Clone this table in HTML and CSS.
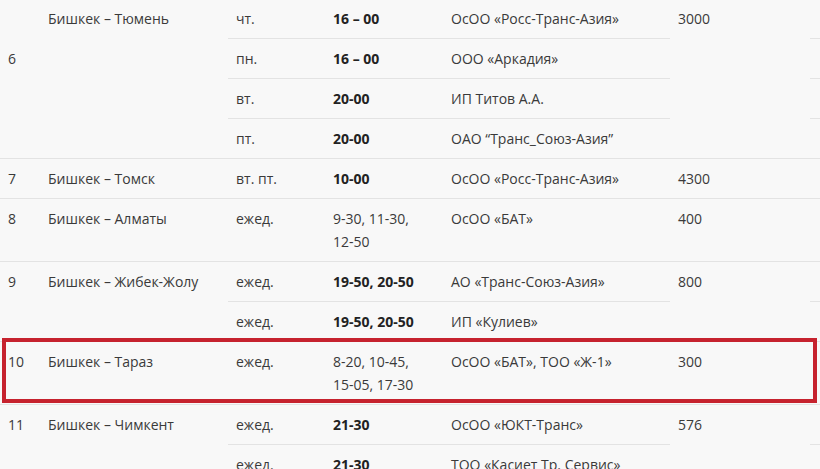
FILE: index.html
```html
<!DOCTYPE html>
<html lang="ru">

<head>
    <meta charset="UTF-8">
    <meta name="viewport" content="width=device-width, initial-scale=1.0">
    <title>Расписание рейсов</title>
    <link rel="stylesheet" href="styles.css">
</head>

<body>
    <div class="schedule">
        <table class="routes">
            <colgroup>
                <col class="c-num">
                <col class="c-route">
                <col class="c-day">
                <col class="c-time">
                <col class="c-carrier">
                <col class="c-price">
                <col class="c-extra">
            </colgroup>
            <tbody>
                <!-- Маршрут 6 (верх строки прокручен за край) -->
                <tr class="sub">
                    <td rowspan="5" class="num mid">6</td>
                    <td>&nbsp;</td>
                    <td>&nbsp;</td>
                    <td>&nbsp;</td>
                    <td>&nbsp;</td>
                    <td>&nbsp;</td>
                    <td>&nbsp;</td>
                </tr>
                <tr class="sub">
                    <td rowspan="4">Бишкек – Тюмень</td>
                    <td>чт.</td>
                    <td class="time">16 – 00</td>
                    <td>ОсОО «Росс-Транс-Азия»</td>
                    <td rowspan="4">3000</td>
                    <td></td>
                </tr>
                <tr class="sub">
                    <td>пн.</td>
                    <td class="time">16 – 00</td>
                    <td>ООО «Аркадия»</td>
                    <td></td>
                </tr>
                <tr class="sub">
                    <td>вт.</td>
                    <td class="time">20-00</td>
                    <td>ИП Титов А.А.</td>
                    <td></td>
                </tr>
                <tr>
                    <td>пт.</td>
                    <td class="time">20-00</td>
                    <td>ОАО “Транс_Союз-Азия”</td>
                    <td></td>
                </tr>

                <!-- Маршрут 7 -->
                <tr>
                    <td class="num">7</td>
                    <td>Бишкек – Томск</td>
                    <td>вт. пт.</td>
                    <td class="time">10-00</td>
                    <td>ОсОО «Росс-Транс-Азия»</td>
                    <td>4300</td>
                    <td></td>
                </tr>

                <!-- Маршрут 8 -->
                <tr>
                    <td class="num">8</td>
                    <td>Бишкек – Алматы</td>
                    <td>ежед.</td>
                    <td><span class="slot">9-30,</span> <span class="slot">11-30,</span> <span class="slot">12-50</span></td>
                    <td>ОсОО «БАТ»</td>
                    <td>400</td>
                    <td></td>
                </tr>

                <!-- Маршрут 9 -->
                <tr class="sub">
                    <td rowspan="2" class="num">9</td>
                    <td rowspan="2">Бишкек – Жибек-Жолу</td>
                    <td>ежед.</td>
                    <td class="time">19-50, 20-50</td>
                    <td>АО «Транс-Союз-Азия»</td>
                    <td rowspan="2">800</td>
                    <td></td>
                </tr>
                <tr>
                    <td>ежед.</td>
                    <td class="time">19-50, 20-50</td>
                    <td>ИП «Кулиев»</td>
                    <td></td>
                </tr>

                <!-- Маршрут 10 -->
                <tr>
                    <td class="num">10</td>
                    <td>Бишкек – Тараз</td>
                    <td>ежед.</td>
                    <td><span class="slot">8-20,</span> <span class="slot">10-45,</span> <span class="slot">15-05,</span> <span class="slot">17-30</span></td>
                    <td>ОсОО «БАТ», ТОО «Ж-1»</td>
                    <td>300</td>
                    <td></td>
                </tr>

                <!-- Маршрут 11 -->
                <tr class="sub">
                    <td rowspan="2" class="num">11</td>
                    <td rowspan="2">Бишкек – Чимкент</td>
                    <td>ежед.</td>
                    <td class="time">21-30</td>
                    <td>ОсОО «ЮКТ-Транс»</td>
                    <td rowspan="2">576</td>
                    <td></td>
                </tr>
                <tr>
                    <td>ежед.</td>
                    <td class="time">21-30</td>
                    <td>ТОО «Касиет Тр. Сервис»</td>
                    <td></td>
                </tr>
            </tbody>
        </table>

        <!-- выделенная строка -->
        <div class="highlight"></div>
    </div>
</body>

</html>
```

FILE: styles.css
```css
body {
    margin: 0;
    background-color: #f8f8f8;
    font-family: "Open Sans", "Noto Sans", sans-serif;
    color: #3a3a3a;
    overflow: hidden;
}

.schedule {
    position: relative;
    width: 900px;
    margin-top: -41px; /* страница прокручена */
}

.routes {
    width: 900px;
    table-layout: fixed;
    border-collapse: collapse;
    font-size: 14px;
    line-height: 23px;
}

.c-num { width: 40px; }
.c-route { width: 188px; }
.c-day { width: 97px; }
.c-time { width: 118px; }
.c-carrier { width: 227px; }
.c-price { width: 140px; }

.routes td {
    height: 23px;
    padding: 8px 8px;
    vertical-align: top;
    border-bottom: 1px solid #e3e3e3;
}

.routes td.mid {
    vertical-align: middle;
}

.routes .time {
    font-weight: 700;
    color: #222;
}

.routes .slot {
    white-space: nowrap;
}

.highlight {
    position: absolute;
    left: 2px;
    top: 379px;
    width: 807px;
    height: 57px;
    border: 4px solid #c6222e;
    pointer-events: none;
}
```
